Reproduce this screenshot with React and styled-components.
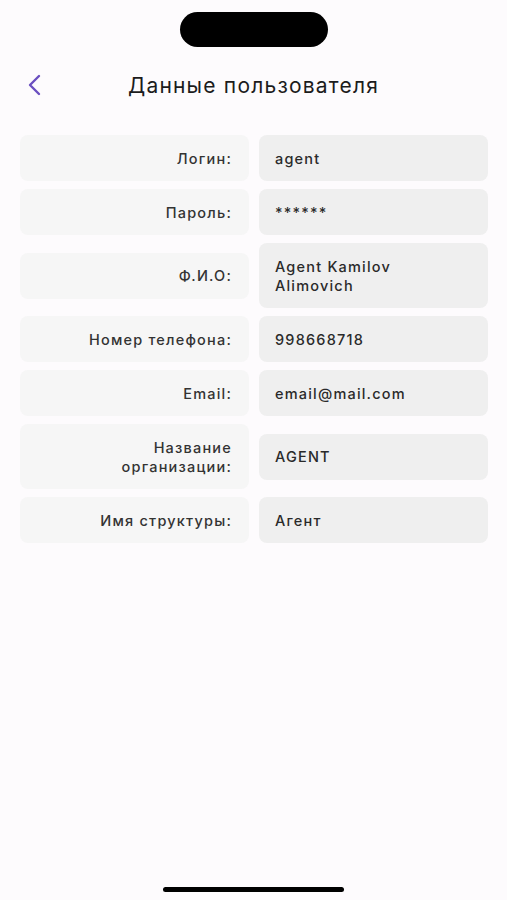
import React from 'react';
import styled, { createGlobalStyle } from 'styled-components';

const GlobalStyle = createGlobalStyle`
  html, body {
    margin: 0;
    padding: 0;
    background: #fdfbfd;
  }
  * { box-sizing: border-box; }
`;

// Phone screen frame
const Screen = styled.div`
  width: 507px;
  height: 900px;
  background: #fdfbfd;
  font-family: Inter, 'Liberation Sans', Arial, sans-serif;
  display: flex;
  flex-direction: column;
  align-items: stretch;
  overflow: hidden;
`;

const StatusBar = styled.div`
  height: 47px;
  padding-top: 12px;
  display: flex;
  justify-content: center;
`;

const Island = styled.div`
  width: 148px;
  height: 35px;
  border-radius: 18px;
  background: #000;
`;

const Header = styled.div`
  height: 76px;
  display: flex;
  align-items: center;
  padding: 0 0 0 24px;
`;

const BackButton = styled.button`
  border: none;
  background: none;
  padding: 0;
  width: 20px;
  height: 24px;
  display: flex;
  align-items: center;
  justify-content: center;
  cursor: pointer;
`;

const Title = styled.h1`
  flex: 1;
  margin: 0;
  padding-right: 44px;
  text-align: center;
  font-size: 21px;
  font-weight: 400;
  color: #1c1c1c;
  letter-spacing: 1.2px;
`;

const Table = styled.div`
  padding: 12px 19px 0 20px;
  display: flex;
  flex-direction: column;
  gap: 8px;
  flex: 1;
`;

const Row = styled.div`
  display: grid;
  grid-template-columns: 1fr 1fr;
  column-gap: 10px;
  align-items: center;
`;

const Cell = styled.div`
  min-height: 46px;
  border-radius: 8px;
  padding: 13.5px 16px;
  font-size: 14.5px;
  font-weight: 500;
  line-height: 19px;
  letter-spacing: 1.2px;
  display: flex;
  align-items: center;
`;

const Label = styled(Cell)`
  background: #f6f6f6;
  color: #333;
  justify-content: flex-end;
  text-align: right;
  padding-right: 17px;
`;

const Value = styled(Cell)`
  background: #efefef;
  color: #2a2a2a;
  min-height: ${({ $tall }) => ($tall ? '65px' : '46px')};
`;

const HomeBar = styled.div`
  height: 37px;
  display: flex;
  justify-content: center;
  padding-top: 24px;
`;

const Indicator = styled.div`
  width: 181px;
  height: 5px;
  border-radius: 3px;
  background: #000;
`;

const fields = [
  { label: 'Логин:', value: 'agent' },
  { label: 'Пароль:', value: '******' },
  { label: 'Ф.И.О:', value: <>Agent Kamilov<br />Alimovich</>, tall: true },
  { label: 'Номер телефона:', value: '998668718' },
  { label: 'Email:', value: 'email@mail.com' },
  { label: <>Название<br />организации:</>, value: 'AGENT' },
  { label: 'Имя структуры:', value: 'Агент' },
];

export default function App() {
  return (
    <>
      <GlobalStyle />
      <Screen>
        <StatusBar>
          <Island />
        </StatusBar>
        <Header>
          <BackButton aria-label="Назад">
            <svg width="14" height="22" viewBox="0 0 14 22" fill="none">
              <path d="M12 2 L3 11 L12 20" stroke="#6b4fc0" strokeWidth="2.4" strokeLinecap="round" strokeLinejoin="round" />
            </svg>
          </BackButton>
          <Title>Данные пользователя</Title>
        </Header>
        <Table>
          {fields.map((f, i) => (
            <Row key={i}>
              <Label>{f.label}</Label>
              <Value $tall={f.tall}>{f.value}</Value>
            </Row>
          ))}
        </Table>
        <HomeBar>
          <Indicator />
        </HomeBar>
      </Screen>
    </>
  );
}
